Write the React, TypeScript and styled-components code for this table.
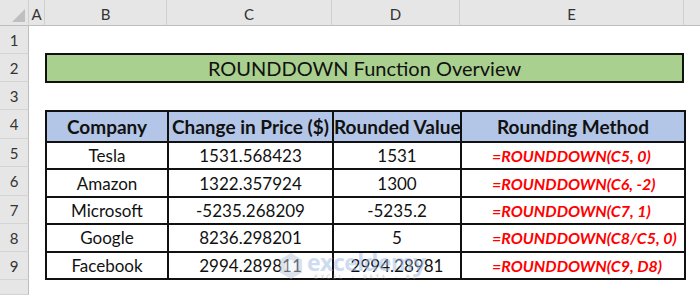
import styled, { createGlobalStyle } from "styled-components";

const GlobalStyle = createGlobalStyle`
  html, body {
    margin: 0;
    padding: 0;
    background: #ffffff;
  }
  body {
    font-family: "Lato", "Liberation Sans", sans-serif;
    overflow: hidden;
  }
`;

const Sheet = styled.div`
  display: grid;
  grid-template-columns: 29px 16px 122px 165px 128px 224px 1fr;
  grid-template-rows: 26px 28px 28px 28px 29px 28px 29px 28px 28px 28px 1fr;
  width: 700px;
  height: 295px;
  position: relative;
`;

const Corner = styled.div`
  grid-column: 1;
  grid-row: 1;
  background: #e6e6e6;
  border-bottom: 1px solid #bdbdbd;
  border-right: 1px solid #d0d0d0;
  position: relative;
  &::after {
    content: "";
    position: absolute;
    right: 3px;
    bottom: 3px;
    width: 0;
    height: 0;
    border-left: 13px solid transparent;
    border-bottom: 13px solid #bfbfbf;
  }
`;

const ColHead = styled.div<{ $col: number }>`
  grid-column: ${(p) => p.$col};
  grid-row: 1;
  background: #e6e6e6;
  border-bottom: 1px solid #bdbdbd;
  border-right: 1px solid #cfcfcf;
  display: flex;
  align-items: center;
  justify-content: center;
  font-family: "Lato", sans-serif;
  font-size: 15px;
  color: #333;
  padding-top: 2px;
  box-sizing: border-box;
`;

const ColTail = styled.div`
  grid-column: 7;
  grid-row: 1;
  background: #e6e6e6;
  border-bottom: 1px solid #bdbdbd;
`;

const RowHead = styled.div<{ $row: number }>`
  grid-column: 1;
  grid-row: ${(p) => p.$row};
  background: #e6e6e6;
  border-right: 1px solid #bdbdbd;
  border-bottom: 1px solid #d4d4d4;
  display: flex;
  align-items: center;
  justify-content: center;
  font-family: "Lato", sans-serif;
  font-size: 15px;
  color: #333;
  box-sizing: border-box;
`;

const Title = styled.div`
  grid-column: 3 / 7;
  grid-row: 3;
  margin-top: -1px;
  background: #a9d08e;
  border: 2px solid #111;
  display: flex;
  align-items: center;
  justify-content: center;
  font-size: 20px;
  color: #111;
  box-sizing: border-box;
  height: 30px;
`;

const TableWrap = styled.div`
  grid-column: 3 / 7;
  grid-row: 5 / 11;
  position: relative;
`;

const Table = styled.table`
  width: 100%;
  height: 100%;
  border-collapse: collapse;
  table-layout: fixed;
  font-size: 17px;
  color: #111;
`;

const HeadCell = styled.th`
  background: #b4c6e7;
  border: 2px solid #111;
  font-weight: 700;
  font-size: 19px;
  padding: 0;
  white-space: nowrap;
  height: 29px;
`;

const Cell = styled.td<{ $formula?: boolean }>`
  border: 2px solid #111;
  padding: ${(p) => (p.$formula ? "0 0 0 30px" : "0")};
  text-align: ${(p) => (p.$formula ? "left" : "center")};
  color: ${(p) => (p.$formula ? "#ff0000" : "#111")};
  font-weight: ${(p) => (p.$formula ? 700 : 400)};
  font-style: ${(p) => (p.$formula ? "italic" : "normal")};
  font-size: ${(p) => (p.$formula ? "16px" : "17px")};
  white-space: nowrap;
`;

const Watermark = styled.div`
  position: absolute;
  left: 234px;
  top: 141px;
  display: flex;
  align-items: center;
  gap: 4px;
  opacity: 0.5;
  pointer-events: none;
`;

const MarkText = styled.div`
  display: flex;
  flex-direction: column;
  align-items: center;
  line-height: 1;
`;

const MarkName = styled.span`
  font-family: "Open Sans", sans-serif;
  font-weight: 700;
  font-size: 23px;
  color: #9fbbe6;
  letter-spacing: -0.5px;
`;

const MarkSub = styled.span`
  font-family: "DejaVu Sans Mono", monospace;
  font-size: 6px;
  color: #9a9a9a;
  letter-spacing: 2.5px;
  margin-top: 0;
`;

const cols = ["A", "B", "C", "D", "E"];

const rows = [
  ["Tesla", "1531.568423", "1531", "=ROUNDDOWN(C5, 0)"],
  ["Amazon", "1322.357924", "1300", "=ROUNDDOWN(C6, -2)"],
  ["Microsoft", "-5235.268209", "-5235.2", "=ROUNDDOWN(C7, 1)"],
  ["Google", "8236.298201", "5", "=ROUNDDOWN(C8/C5, 0)"],
  ["Facebook", "2994.289811", "2994.28981", "=ROUNDDOWN(C9, D8)"],
];

function App() {
  return (
    <>
      <GlobalStyle />
      <Sheet>
        <Corner />
        {cols.map((c, i) => (
          <ColHead key={c} $col={i + 2}>
            {c}
          </ColHead>
        ))}
        <ColTail />
        {Array.from({ length: 10 }, (_, i) => (
          <RowHead key={i} $row={i + 2}>
            {i < 9 ? i + 1 : ""}
          </RowHead>
        ))}
        <Title>ROUNDDOWN Function Overview</Title>
        <TableWrap>
          <Table>
            <colgroup>
              <col style={{ width: 122 }} />
              <col style={{ width: 165 }} />
              <col style={{ width: 128 }} />
              <col style={{ width: 224 }} />
            </colgroup>
            <thead>
              <tr>
                <HeadCell>Company</HeadCell>
                <HeadCell>Change in Price ($)</HeadCell>
                <HeadCell>Rounded Value</HeadCell>
                <HeadCell>Rounding Method</HeadCell>
              </tr>
            </thead>
            <tbody>
              {rows.map((r) => (
                <tr key={r[0]}>
                  <Cell>{r[0]}</Cell>
                  <Cell>{r[1]}</Cell>
                  <Cell>{r[2]}</Cell>
                  <Cell $formula>{r[3]}</Cell>
                </tr>
              ))}
            </tbody>
          </Table>
          <Watermark>
            <svg width="24" height="28" viewBox="0 0 26 30">
              <path d="M13 1 L25 8 L25 22 L13 29 L1 22 L1 8 Z" fill="#b9c6d8" />
              <path d="M13 8 L19 11.5 L19 18.5 L13 22 L7 18.5 L7 11.5 Z" fill="#eef2f7" />
            </svg>
            <MarkText>
              <MarkName>exceldemy</MarkName>
              <MarkSub>EXCEL · DATA · BI</MarkSub>
            </MarkText>
          </Watermark>
        </TableWrap>
      </Sheet>
    </>
  );
}

export default App;
